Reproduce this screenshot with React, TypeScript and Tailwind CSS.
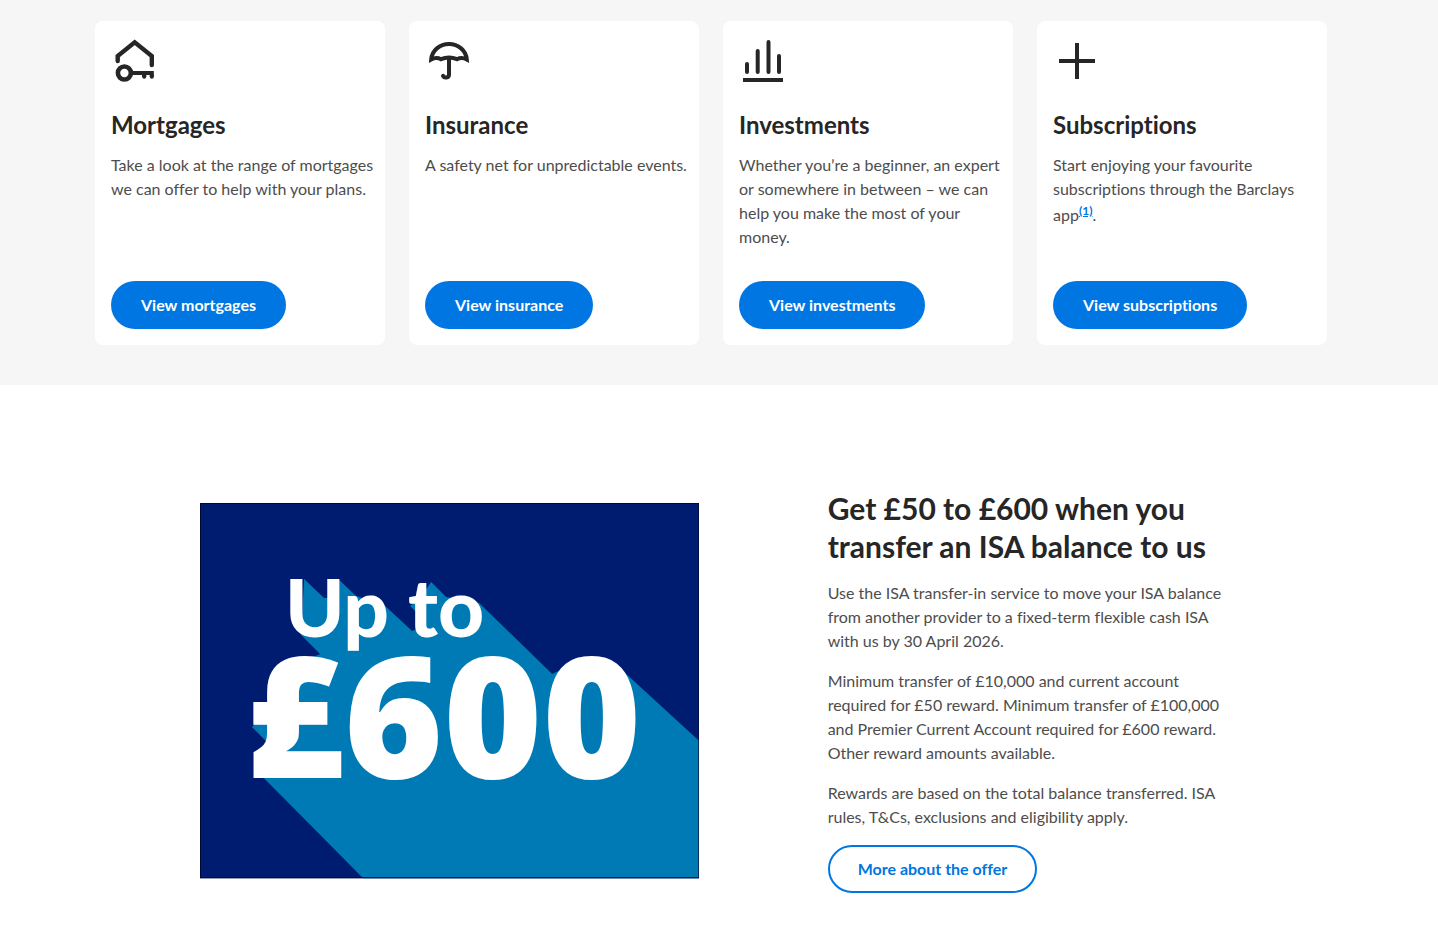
import React from 'react';

interface Product {
  title: string;
  text: React.ReactNode;
  action: string;
  icon: React.ReactNode;
}

const products: Product[] = [
  {
    title: 'Mortgages',
    text: 'Take a look at the range of mortgages we can offer to help with your plans.',
    action: 'View mortgages',
    icon: (
      <>
        <path d="M6.7 24V19L23.7 5.4 40.8 19V28" strokeLinecap="round" strokeWidth="4.4" />
        <circle cx="13.4" cy="36" r="6.5" strokeWidth="4.6" />
        <path d="M20 36H42.8M33.2 36V40M40.8 36V40" />
        <path d="M33.2 38V39.8M40.8 38V39.8" strokeLinecap="round" />
      </>
    ),
  },
  {
    title: 'Insurance',
    text: 'A safety net for unpredictable events.',
    action: 'View insurance',
    icon: (
      <>
        <path d="M6.2 22.4C7 13.5 14.6 7 24 7S41 13.5 41.8 22.4C38 20.4 35 20.6 32 22.2 27 20 21 20 16 22.2 13 20.6 10 20.4 6.2 22.4Z" />
        <path d="M24 21V37.5C24 41.2 19 41.4 18 38.8" strokeLinecap="round" />
      </>
    ),
  },
  {
    title: 'Investments',
    text: 'Whether you’re a beginner, an expert or somewhere in between – we can help you make the most of your money.',
    action: 'View investments',
    icon: (
      <>
        <path d="M8 27V35M18.7 14V35M29.5 5V35M40 19V35" strokeLinecap="round" />
        <path d="M4 43H44" />
      </>
    ),
  },
  {
    title: 'Subscriptions',
    text: (
      <>
        Start enjoying your favourite subscriptions through the Barclays app
        <sup className="static align-super text-xs leading-5 font-bold">
          <a href="#note-1" className="text-[#0076e3] underline">(1)</a>
        </sup>
        .
      </>
    ),
    action: 'View subscriptions',
    icon: <path d="M24 6V42M6 24H42" />,
  },
];

const ProductCard: React.FC<{ product: Product }> = ({ product }) => (
  <article className="flex flex-col items-start rounded-lg bg-white py-4 pr-2 pl-4">
    <svg viewBox="0 0 48 48" className="h-12 w-12" fill="none" stroke="#262626" strokeWidth="4" aria-hidden="true">
      {product.icon}
    </svg>
    <h2 className="mt-6 text-2xl font-bold text-[#262626]">{product.title}</h2>
    <p className="mt-3 mb-8">{product.text}</p>
    <a
      href="#"
      className="mt-auto flex h-12 items-center rounded-full bg-[#0076e3] px-[30px] font-bold whitespace-nowrap text-white hover:bg-[#005eb8]"
    >
      {product.action}
    </a>
  </article>
);

const OfferBanner: React.FC = () => (
  <svg viewBox="0 0 499 375" className="block w-full" role="img" aria-label="Up to £600">
    <rect width="499" height="375" fill="#001c71" />
    {/* long shadow behind the lettering */}
    <path
      d="M104 76L124 95H138V76L156 93 184 102 212 128 221 124V114L210 103 222 92 231 79 246 94 279 100 352 171 375 160H410L427 172 499 238V375H163L63 274 75 235 66 238 52 224 80 190 90 165 120 151 101 132Z"
      fill="#007ab5"
    />
    <g fill="#fff" fontWeight="900">
      <text x="85" y="134" fontSize="80" fontFamily="Lato, sans-serif">Up to</text>
      <text x="45" y="275" fontSize="169" fontFamily="'Open Sans', sans-serif">£600</text>
    </g>
    <rect x="0.5" y="0.5" width="498" height="374" fill="none" stroke="#000b35" />
  </svg>
);

const App: React.FC = () => {
  return (
    <main className="bg-white font-[Lato,sans-serif] text-base text-[#4d4d4d] [font-variant-ligatures:none]">
      <section className="bg-[#f6f6f6] pt-[21px] pr-4 pb-10">
        <div className="mx-auto grid max-w-[1232px] grid-cols-4 gap-6">
          {products.map((product) => (
            <ProductCard key={product.title} product={product} />
          ))}
        </div>
      </section>

      <section className="pt-[104px] pr-4 pb-9">
        <div className="mx-auto grid max-w-[1232px] grid-cols-12 items-center gap-6">
          <div className="col-span-5 col-start-2">
            <OfferBanner />
          </div>
          <div className="col-span-4 col-start-8 flex flex-col items-start gap-4">
            <h2 className="text-[30px] leading-[38px] font-bold text-[#262626]">
              Get £50 to £600 when you transfer an ISA balance to us
            </h2>
            <p>
              Use the ISA transfer-in service to move your ISA balance from another provider to a fixed-term flexible
              cash ISA with us by 30 April 2026.
            </p>
            <p>
              Minimum transfer of £10,000 and current account required for £50 reward. Minimum transfer of £100,000 and
              Premier Current Account required for £600 reward. Other reward amounts available.
            </p>
            <p>
              Rewards are based on the total balance transferred. ISA rules, T&Cs, exclusions and eligibility apply.
            </p>
            <a
              href="#"
              className="flex h-12 items-center rounded-full border-2 border-[#0076e3] px-7 font-bold whitespace-nowrap text-[#0076e3] hover:bg-[#f0f7ff]"
            >
              More about the offer
            </a>
          </div>
        </div>
      </section>
    </main>
  );
};

export default App;
